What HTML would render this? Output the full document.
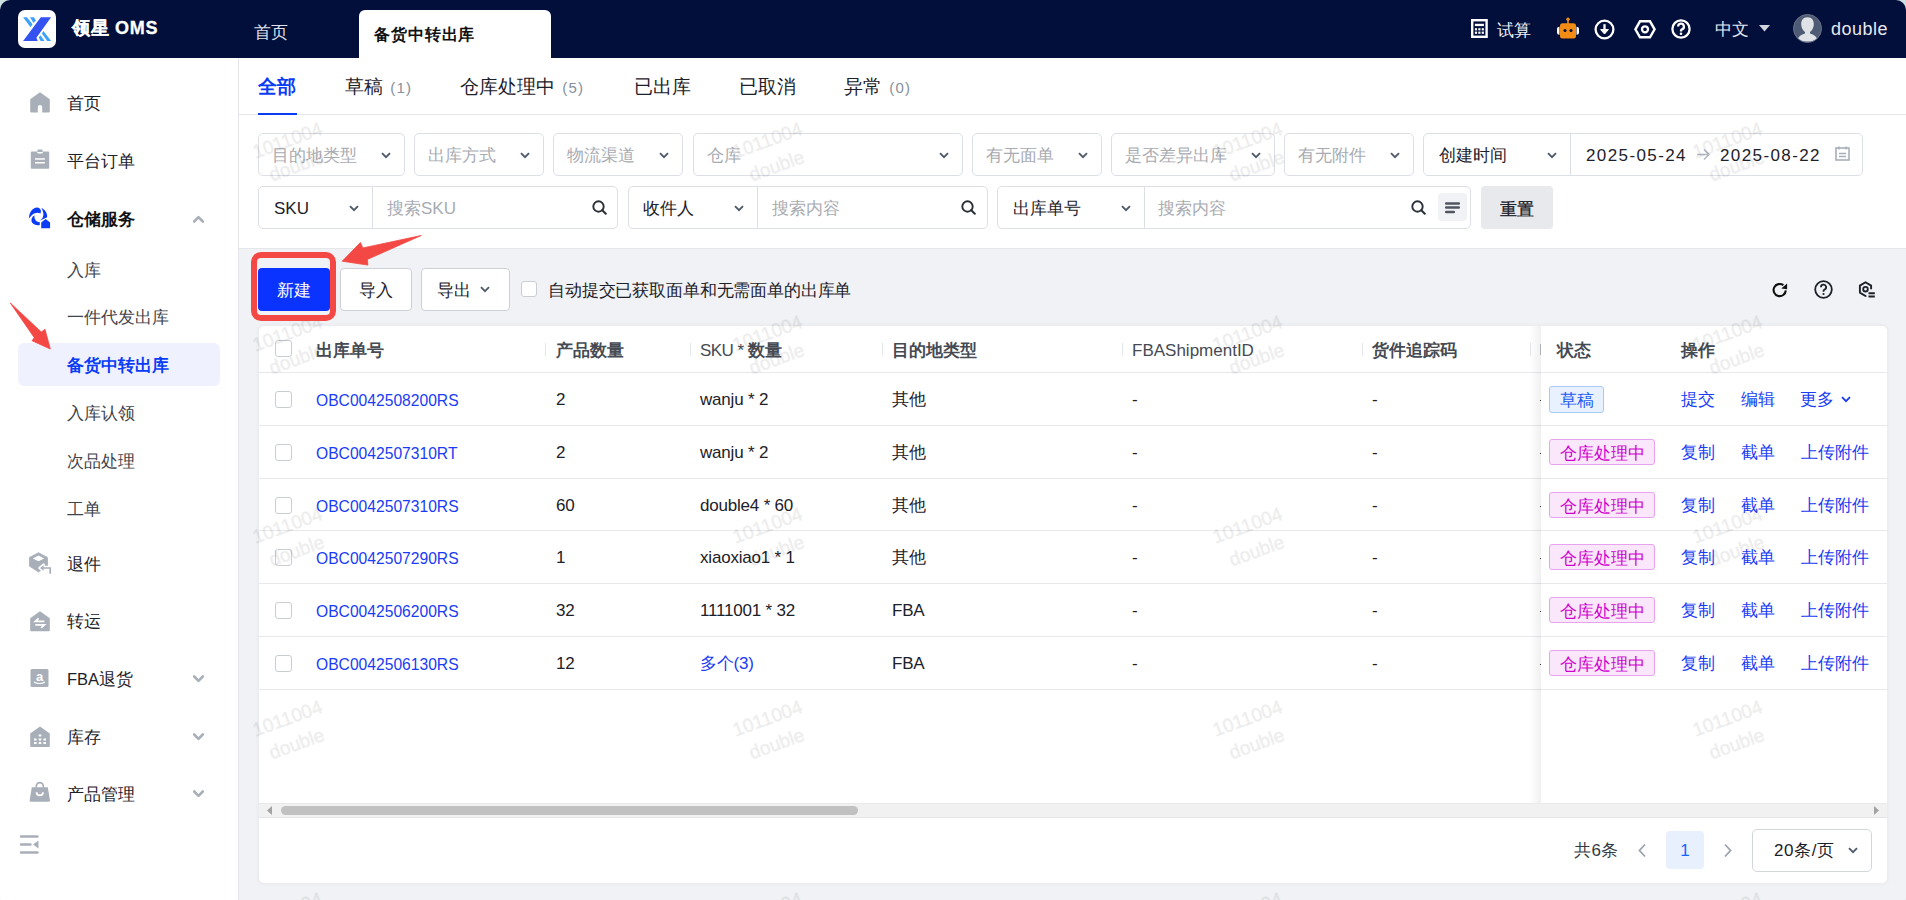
<!DOCTYPE html>
<html><head><meta charset="utf-8">
<style>
*{box-sizing:border-box;margin:0;padding:0}
html,body{width:1906px;height:900px;overflow:hidden;background:#cfe0e1}
body{font-family:"Liberation Sans",sans-serif;font-size:17px;color:#1d2129;position:relative}
.a{position:absolute;white-space:nowrap}
#win{position:absolute;left:0;top:0;width:1906px;height:907px;border-radius:10px;overflow:hidden;background:#f0f2f5}
#hdr{position:absolute;left:0;top:0;width:1906px;height:58px;background:#020f3b}
#side{position:absolute;left:0;top:58px;width:239px;height:842px;background:#fff;border-right:1px solid #e5e6eb}
.t{position:absolute;white-space:nowrap;line-height:20px;height:20px}
.box{position:absolute;border:1px solid #dcdfe6;border-radius:5px;background:#fff}
.ph{color:#a8abb2}
.chev{position:absolute;width:10px;height:6px}
.sep{position:absolute;width:1px;background:#dcdfe6}
.row{position:absolute;left:259px;width:1628px;height:1px;background:#e6e8eb}
.lnk{color:#1a3cf5}
.cb{position:absolute;width:17px;height:17px;border:1px solid #c9cdd4;border-radius:3px;background:#fff}
.cnt{font-size:15px;color:#86909c;letter-spacing:1.2px;margin-left:2px}
.th{font-weight:bold;color:#464b53;font-size:16.5px}
.sb{font-size:16.5px}
.tag{position:absolute;border-radius:3px;text-align:center;line-height:28px;white-space:nowrap}
.num{letter-spacing:-0.2px}
.obc{transform:scaleX(0.92);transform-origin:0 50%}
.wm{position:absolute;color:#000;-webkit-text-stroke:0.5px #000;opacity:0.065;font-size:19px;line-height:27px;text-align:center;transform:rotate(-20deg);width:100px;white-space:nowrap}
</style></head><body>
<div id="win">
<!-- HEADER -->
<div id="hdr">
  <div class="a" style="left:18px;top:10px;width:38px;height:38px;background:#fff;border-radius:7px">
    <svg width="38" height="38" viewBox="0 0 38 38" style="position:absolute;left:0;top:0">
      <polygon points="22.8,7.2 33.1,7.2 18.4,27.8 19.8,31 5.1,31" fill="#3352f0"/>
      <polygon points="5.1,7.2 8.9,7.2 14.6,14.2 12.5,17.3" fill="#3ba1fd"/>
      <polygon points="12,7.2 15.9,7.2 17.9,10.4 15.5,12.9" fill="#3ba1fd"/>
      <polygon points="25.4,20.9 33.1,31 29.2,31 23.9,23.5" fill="#3ba1fd"/>
      <polygon points="22.4,25.3 26.6,31 22.6,31 20.7,27.5" fill="#3ba1fd"/>
    </svg>
  </div>
  <div class="t" style="left:72px;top:18px;font-size:18px;font-weight:bold;color:#fff;letter-spacing:0.7px;-webkit-text-stroke:0.3px #fff">领星 OMS</div>
  <div class="t" style="left:254px;top:23px;color:#dde1ea">首页</div>
  <div class="a" style="left:359px;top:10px;width:192px;height:48px;background:#fff;border-radius:6px 6px 0 0"></div>
  <div class="t" style="left:374px;top:25px;font-size:16px;font-weight:bold;color:#111;letter-spacing:0.9px">备货中转出库</div>
  <!-- right -->
  <svg class="a" style="left:1471px;top:19px" width="17" height="19" viewBox="0 0 17 19"><rect x="1.2" y="1.2" width="14.4" height="16.6" fill="none" stroke="#fff" stroke-width="2.4"/><rect x="3.9" y="4.8" width="9" height="2.3" fill="#fff"/><g fill="#fff"><rect x="3.9" y="9.2" width="2.2" height="2.2"/><rect x="7.3" y="9.2" width="2.2" height="2.2"/><rect x="10.7" y="9.2" width="2.2" height="2.2"/><rect x="3.9" y="12.6" width="2.2" height="2.2"/><rect x="7.3" y="12.6" width="2.2" height="2.2"/><rect x="10.7" y="12.6" width="2.2" height="2.2"/></g></svg>
  <div class="t" style="left:1497px;top:21px;color:#eef0f4">试算</div>
  <svg class="a" style="left:1556px;top:17px" width="24" height="23" viewBox="0 0 24 23"><circle cx="12" cy="2.2" r="1.7" fill="#f28c14"/><rect x="11.2" y="2.5" width="1.6" height="4.5" fill="#f28c14"/><rect x="4" y="6.2" width="16" height="15.2" rx="2.5" fill="#f28c14"/><path d="M3.5 9.8H3.2A2.2 2.2 0 0 0 1 12V15.6A2.2 2.2 0 0 0 3.2 17.8H3.5Z M20.5 9.8H20.8A2.2 2.2 0 0 1 23 12V15.6A2.2 2.2 0 0 1 20.8 17.8H20.5Z" fill="#fff"/><circle cx="9" cy="13.6" r="1.5" fill="#020f3b"/><circle cx="15" cy="13.6" r="1.5" fill="#020f3b"/></svg>
  <svg class="a" style="left:1594px;top:19px" width="21" height="21" viewBox="0 0 21 21"><circle cx="10.5" cy="10.5" r="8.9" fill="none" stroke="#fff" stroke-width="2.3"/><path d="M10.5 5.2v6" fill="none" stroke="#fff" stroke-width="2.3"/><path d="M6.6 10.6h7.8l-3.9 4.4z" fill="#fff" stroke="#fff" stroke-width="1" stroke-linejoin="round"/></svg>
  <svg class="a" style="left:1634px;top:20px" width="22" height="19" viewBox="0 0 22 19"><polygon points="6,1.3 16,1.3 20.6,9.3 16,17.3 6,17.3 1.4,9.3" fill="none" stroke="#fff" stroke-width="2.4"/><circle cx="11" cy="9.3" r="3" fill="none" stroke="#fff" stroke-width="2.3"/></svg>
  <svg class="a" style="left:1671px;top:19px" width="20" height="20" viewBox="0 0 20 20"><circle cx="10" cy="10" r="8.6" fill="none" stroke="#fff" stroke-width="2.3"/><path d="M7.1 7.6a2.9 2.9 0 1 1 3.9 2.7c-.7.3-1 .8-1 1.5v.6" fill="none" stroke="#fff" stroke-width="2.3"/><circle cx="10" cy="14.8" r="1.3" fill="#fff"/></svg>
  <div class="t" style="left:1715px;top:20px;color:#e6e8ee">中文</div>
  <svg class="a" style="left:1759px;top:25px" width="11" height="7" viewBox="0 0 11 7"><polygon points="0,0 11,0 5.5,6.5" fill="#d0d4dc"/></svg>
  <div class="a" style="left:1793px;top:14px;width:29px;height:29px;border-radius:50%;background:#4f5a74;overflow:hidden;border:1px solid #6a7388"><svg width="29" height="29" viewBox="0 0 29 29" style="position:absolute;left:-1px;top:-1px"><path d="M14.5 3.3C10 3.3 8 6.5 8.2 10.5C8.4 14 10 16.5 12 18L12 19.5C8 20.5 5.5 22.5 5 25C8 27 11 27.5 14.5 27.5C18 27.5 21 27 24 25C23.5 22.5 21 20.5 17 19.5L17 18C19 16.5 20.6 14 20.8 10.5C21 6.5 19 3.3 14.5 3.3Z" fill="#dfe2e7"/></svg></div>
  <div class="t" style="left:1831px;top:19px;color:#e6e8ee;font-size:18px;letter-spacing:0.5px">double</div>
</div>

<!-- SIDEBAR -->
<div id="side"></div>
<div class="a" style="left:18px;top:343px;width:202px;height:43px;background:#eff2fe;border-radius:6px"></div>
<div class="t sb" style="left:67px;top:93px">首页</div>
<div class="t sb" style="left:67px;top:151px">平台订单</div>
<div class="t sb" style="left:67px;top:209px;font-weight:bold;color:#111">仓储服务</div>
<div class="t sb" style="left:67px;top:260px;color:#3f434a">入库</div>
<div class="t sb" style="left:67px;top:307px;color:#3f434a">一件代发出库</div>
<div class="t sb" style="left:67px;top:355px;font-weight:bold;color:#0b3cf5">备货中转出库</div>
<div class="t sb" style="left:67px;top:403px;color:#3f434a">入库认领</div>
<div class="t sb" style="left:67px;top:451px;color:#3f434a">次品处理</div>
<div class="t sb" style="left:67px;top:499px;color:#3f434a">工单</div>
<div class="t sb" style="left:67px;top:554px">退件</div>
<div class="t sb" style="left:67px;top:611px">转运</div>
<div class="t sb" style="left:67px;top:669px">FBA退货</div>
<div class="t sb" style="left:67px;top:727px">库存</div>
<div class="t sb" style="left:67px;top:784px">产品管理</div>
<!-- sidebar icons -->
<svg class="a" style="left:30px;top:92px" width="20" height="21" viewBox="0 0 20 21"><path d="M10 0.3L19.8 7.2V19.6a0.8 0.8 0 0 1-0.8 0.8H12.2V15.3a2.2 2.2 0 0 0-4.4 0V20.4H1a0.8 0.8 0 0 1-0.8-0.8V7.2Z" fill="#a9afb9"/></svg>
<svg class="a" style="left:30px;top:149px" width="20" height="21" viewBox="0 0 20 21"><path d="M1.8 2.4H7.2V3.4a1 1 0 0 0 1 1H11.8a1 1 0 0 0 1-1V2.4H18.2a1 1 0 0 1 1 1V18.8a1 1 0 0 1-1 1H1.8a1 1 0 0 1-1-1V3.4a1 1 0 0 1 1-1Z" fill="#a9afb9"/><rect x="7.3" y="0.5" width="5.4" height="2.6" rx="1.2" fill="#a9afb9"/><rect x="5" y="9.2" width="9.8" height="1.5" fill="#fff"/><rect x="5" y="13" width="9.8" height="1.5" fill="#fff"/></svg>
<svg class="a" style="left:26px;top:204px" width="28" height="28" viewBox="0 0 28 28"><g fill="#0b3cf5"><path d="M3.1,14.4 C2.6,9 6.5,3.5 11.2,3.4 C12.8,3.4 14.2,4.3 15.0,6.8 L14.6,9.4 C12,8.2 8.5,8.5 6,11 C4.8,12.2 3.8,13.4 3.1,14.4 Z"/><path d="M15.3,3.9 C18.8,5.3 21.4,8.6 21.2,13.2 L13.6,16.8 C16.5,15 17.6,12.5 17.4,10 C17.2,7.8 16.5,5.6 15.3,3.9 Z"/><path d="M8.4,11.3 C5.8,13 4.6,16.5 6.2,18.8 C7.8,21 11,21.6 13.8,21 L13.8,18.3 C11.5,18.3 9.5,17 8.8,14.8 C8.4,13.6 8.3,12.4 8.4,11.3 Z"/><path d="M15.2,24.2 V18.6 L19.6,15.1 L24.1,18.6 V24.2 Z"/></g></svg>
<svg class="a" style="left:193px;top:215px" width="11" height="8" viewBox="0 0 11 8"><path d="M1.2 6.5L5.5 2.2 9.8 6.5" fill="none" stroke="#a9afb9" stroke-width="2.6" stroke-linecap="round" stroke-linejoin="round"/></svg>
<svg class="a" style="left:29px;top:552px" width="23" height="23" viewBox="0 0 23 23"><path d="M9.5 0.7L18.5 5.5V14L9.5 20 0.3 14V5.5Z" fill="#a9afb9" stroke="#a9afb9" stroke-width="0.8" stroke-linejoin="round"/><path d="M9.5 3.6L15.2 6.4 9.5 9.2 3.8 6.4Z" fill="#fff"/><path d="M12 16H21.2V21.8" fill="none" stroke="#fff" stroke-width="4.6"/><path d="M10.5 16L14.6 12.6V19.4Z" fill="#fff" stroke="#fff" stroke-width="2.4" stroke-linejoin="round"/><path d="M13 16H21.2V21.8" fill="none" stroke="#a9afb9" stroke-width="1.7"/><path d="M11 16L14.6 13.2V18.8Z" fill="#a9afb9"/></svg>
<svg class="a" style="left:30px;top:611px" width="20" height="21" viewBox="0 0 20 21"><path d="M10 0.3L19.8 7.2V19.4a0.8 0.8 0 0 1-0.8 0.8H1a0.8 0.8 0 0 1-0.8-0.8V7.2Z" fill="#a9afb9"/><path d="M14.4 10.4H5.3L8.6 7.4M5.3 13.8H14.4L11.1 16.8" fill="none" stroke="#fff" stroke-width="1.7"/></svg>
<svg class="a" style="left:30px;top:669px" width="19" height="18" viewBox="0 0 19 18"><rect x="0.5" y="0" width="18" height="18" rx="1.5" fill="#a9afb9"/><text x="9.5" y="11.8" font-size="13" font-weight="bold" font-family="Liberation Sans" fill="#fff" text-anchor="middle">a</text><path d="M4 13c3 2 8 2 11 0" fill="none" stroke="#fff" stroke-width="1.2"/></svg>
<svg class="a" style="left:30px;top:726px" width="20" height="21" viewBox="0 0 20 21"><path d="M10 0.5L19.8 7.5V20a1 1 0 0 1-1 1H1.2a1 1 0 0 1-1-1V7.5z" fill="#a9afb9"/><g fill="#fff"><rect x="8.7" y="8.5" width="2.6" height="2"/><rect x="4" y="12.5" width="2.6" height="2"/><rect x="8.7" y="12.5" width="2.6" height="2"/><rect x="13.4" y="12.5" width="2.6" height="2"/><rect x="4" y="16" width="2.6" height="2"/><rect x="8.7" y="16" width="2.6" height="2"/><rect x="13.4" y="16" width="2.6" height="2"/></g></svg>
<svg class="a" style="left:29px;top:781px" width="22" height="22" viewBox="0 0 22 22"><path d="M7.3 6.5V5.2a3.5 3.5 0 0 1 7 0V6.5" fill="none" stroke="#a9afb9" stroke-width="1.7"/><path d="M2.8 6.2H18.8L21 19.6a1 1 0 0 1-1 1.1H1.6a1 1 0 0 1-1-1.1Z" fill="#a9afb9"/><path d="M7.6 11.2a3.2 3.2 0 0 0 6.4 0" fill="none" stroke="#fff" stroke-width="1.8"/></svg>
<svg class="a" style="left:193px;top:675px" width="11" height="8" viewBox="0 0 11 8"><path d="M1.2 1.5L5.5 5.8 9.8 1.5" fill="none" stroke="#a9afb9" stroke-width="2.6" stroke-linecap="round" stroke-linejoin="round"/></svg>
<svg class="a" style="left:193px;top:733px" width="11" height="8" viewBox="0 0 11 8"><path d="M1.2 1.5L5.5 5.8 9.8 1.5" fill="none" stroke="#a9afb9" stroke-width="2.6" stroke-linecap="round" stroke-linejoin="round"/></svg>
<svg class="a" style="left:193px;top:790px" width="11" height="8" viewBox="0 0 11 8"><path d="M1.2 1.5L5.5 5.8 9.8 1.5" fill="none" stroke="#a9afb9" stroke-width="2.6" stroke-linecap="round" stroke-linejoin="round"/></svg>
<svg class="a" style="left:19px;top:834px" width="21" height="21" viewBox="0 0 21 21"><g stroke="#a9afb9" stroke-width="2.4" stroke-linecap="round"><path d="M2 2.5h16.5M2 10.5h9.5M2 18.5h16.5"/></g><path d="M19.5 6.5v8L14 10.5z" fill="#a9afb9"/></svg>
<!-- sidebar red arrow -->


<!-- CONTENT top white -->
<div class="a" style="left:239px;top:58px;width:1667px;height:190px;background:#fff"></div>
<div class="a" style="left:239px;top:114px;width:1667px;height:1px;background:#e5e6eb"></div>
<div class="a" style="left:239px;top:248px;width:1667px;height:1px;background:#e6e7eb"></div>
<!-- TABS -->
<div class="t" style="left:258px;top:77px;font-size:19px;font-weight:bold;color:#0b3cf5">全部</div>
<div class="a" style="left:258px;top:113px;width:39px;height:2px;background:#0b3cf5"></div>
<div class="t" style="left:345px;top:77px;font-size:19px">草稿 <span class="cnt">(1)</span></div>
<div class="t" style="left:460px;top:77px;font-size:19px">仓库处理中 <span class="cnt">(5)</span></div>
<div class="t" style="left:634px;top:77px;font-size:19px">已出库</div>
<div class="t" style="left:739px;top:77px;font-size:19px">已取消</div>
<div class="t" style="left:844px;top:77px;font-size:19px">异常 <span class="cnt">(0)</span></div>

<!-- FILTER ROW 1 -->
<div class="box" style="left:258px;top:133px;width:147px;height:43px"></div>
<div class="t ph" style="left:272px;top:146px">目的地类型</div>
<div class="box" style="left:414px;top:133px;width:130px;height:43px"></div>
<div class="t ph" style="left:428px;top:146px">出库方式</div>
<div class="box" style="left:553px;top:133px;width:130px;height:43px"></div>
<div class="t ph" style="left:567px;top:146px">物流渠道</div>
<div class="box" style="left:693px;top:133px;width:270px;height:43px"></div>
<div class="t ph" style="left:707px;top:146px">仓库</div>
<div class="box" style="left:972px;top:133px;width:130px;height:43px"></div>
<div class="t ph" style="left:986px;top:146px">有无面单</div>
<div class="box" style="left:1111px;top:133px;width:164px;height:43px"></div>
<div class="t ph" style="left:1125px;top:146px">是否差异出库</div>
<div class="box" style="left:1284px;top:133px;width:130px;height:43px"></div>
<div class="t ph" style="left:1298px;top:146px">有无附件</div>
<div class="box" style="left:1423px;top:133px;width:440px;height:43px"></div>
<div class="sep" style="left:1570px;top:134px;height:41px"></div>
<div class="t" style="left:1439px;top:146px">创建时间</div>
<div class="t" style="left:1586px;top:146px;letter-spacing:1.4px">2025-05-24</div>
<div class="t" style="left:1720px;top:146px;letter-spacing:1.4px">2025-08-22</div>
<svg class="a" style="left:1696px;top:148px" width="15" height="13" viewBox="0 0 15 13"><path d="M1 6.5h12M8 1.5l5 5-5 5" fill="none" stroke="#b5b9c2" stroke-width="1.6"/></svg>
<svg class="a" style="left:1835px;top:146px" width="15" height="15" viewBox="0 0 15 15"><rect x="1" y="2" width="13" height="12" fill="none" stroke="#a9afb9" stroke-width="1.6"/><path d="M4 0.5v3M11 0.5v3M4 7.5h7M4 10.5h7" stroke="#a9afb9" stroke-width="1.5"/></svg>

<!-- FILTER ROW 2 -->
<div class="box" style="left:258px;top:186px;width:360px;height:43px"></div>
<div class="sep" style="left:372px;top:187px;height:41px"></div>
<div class="t" style="left:274px;top:199px">SKU</div>
<div class="t ph" style="left:387px;top:199px">搜索SKU</div>
<div class="box" style="left:628px;top:186px;width:360px;height:43px"></div>
<div class="sep" style="left:757px;top:187px;height:41px"></div>
<div class="t" style="left:643px;top:199px">收件人</div>
<div class="t ph" style="left:772px;top:199px">搜索内容</div>
<div class="box" style="left:997px;top:186px;width:474px;height:43px"></div>
<div class="sep" style="left:1144px;top:187px;height:41px"></div>
<div class="t" style="left:1013px;top:199px">出库单号</div>
<div class="t ph" style="left:1158px;top:199px">搜索内容</div>
<div class="a" style="left:1438px;top:193px;width:29px;height:28px;background:#f0f2f5;border-radius:4px"></div>
<svg class="a" style="left:1443px;top:200px" width="19" height="15" viewBox="0 0 19 15"><path d="M3.2 3.4h12.6M3.2 7.5h12.6M3.2 12h7.6" stroke="#50555f" stroke-width="2.5" stroke-linecap="round"/></svg>
<div class="a" style="left:1481px;top:186px;width:72px;height:43px;background:#e8e9ed;border-radius:4px"></div>
<div class="t" style="left:1500px;top:200px;color:#1d2129;-webkit-text-stroke:0.35px #1d2129">重置</div>
<svg class="a" style="left:381px;top:152px" width="10" height="7" viewBox="0 0 10 7"><path d="M1 1.2L5 5.2 9 1.2" fill="none" stroke="#4e5969" stroke-width="1.9"/></svg>
<svg class="a" style="left:520px;top:152px" width="10" height="7" viewBox="0 0 10 7"><path d="M1 1.2L5 5.2 9 1.2" fill="none" stroke="#4e5969" stroke-width="1.9"/></svg>
<svg class="a" style="left:659px;top:152px" width="10" height="7" viewBox="0 0 10 7"><path d="M1 1.2L5 5.2 9 1.2" fill="none" stroke="#4e5969" stroke-width="1.9"/></svg>
<svg class="a" style="left:939px;top:152px" width="10" height="7" viewBox="0 0 10 7"><path d="M1 1.2L5 5.2 9 1.2" fill="none" stroke="#4e5969" stroke-width="1.9"/></svg>
<svg class="a" style="left:1078px;top:152px" width="10" height="7" viewBox="0 0 10 7"><path d="M1 1.2L5 5.2 9 1.2" fill="none" stroke="#4e5969" stroke-width="1.9"/></svg>
<svg class="a" style="left:1251px;top:152px" width="10" height="7" viewBox="0 0 10 7"><path d="M1 1.2L5 5.2 9 1.2" fill="none" stroke="#4e5969" stroke-width="1.9"/></svg>
<svg class="a" style="left:1390px;top:152px" width="10" height="7" viewBox="0 0 10 7"><path d="M1 1.2L5 5.2 9 1.2" fill="none" stroke="#4e5969" stroke-width="1.9"/></svg>
<svg class="a" style="left:1547px;top:152px" width="10" height="7" viewBox="0 0 10 7"><path d="M1 1.2L5 5.2 9 1.2" fill="none" stroke="#4e5969" stroke-width="1.9"/></svg>
<svg class="a" style="left:349px;top:205px" width="10" height="7" viewBox="0 0 10 7"><path d="M1 1.2L5 5.2 9 1.2" fill="none" stroke="#4e5969" stroke-width="1.9"/></svg>
<svg class="a" style="left:734px;top:205px" width="10" height="7" viewBox="0 0 10 7"><path d="M1 1.2L5 5.2 9 1.2" fill="none" stroke="#4e5969" stroke-width="1.9"/></svg>
<svg class="a" style="left:1121px;top:205px" width="10" height="7" viewBox="0 0 10 7"><path d="M1 1.2L5 5.2 9 1.2" fill="none" stroke="#4e5969" stroke-width="1.9"/></svg>
<svg class="a" style="left:592px;top:200px" width="15" height="15" viewBox="0 0 15 15"><circle cx="6.5" cy="6.5" r="5.2" fill="none" stroke="#2b3037" stroke-width="1.9"/><path d="M10.3 10.3L13.8 13.8" stroke="#2b3037" stroke-width="2" stroke-linecap="round"/></svg>
<svg class="a" style="left:961px;top:200px" width="15" height="15" viewBox="0 0 15 15"><circle cx="6.5" cy="6.5" r="5.2" fill="none" stroke="#2b3037" stroke-width="1.9"/><path d="M10.3 10.3L13.8 13.8" stroke="#2b3037" stroke-width="2" stroke-linecap="round"/></svg>
<svg class="a" style="left:1411px;top:200px" width="15" height="15" viewBox="0 0 15 15"><circle cx="6.5" cy="6.5" r="5.2" fill="none" stroke="#2b3037" stroke-width="1.9"/><path d="M10.3 10.3L13.8 13.8" stroke="#2b3037" stroke-width="2" stroke-linecap="round"/></svg>


<!-- TOOLBAR -->
<div class="a" style="left:258px;top:268px;width:72px;height:43px;background:#0a33ff;border-radius:4px"></div>
<div class="t" style="left:277px;top:281px;color:#fff">新建</div>
<div class="box" style="left:340px;top:268px;width:72px;height:43px;border-radius:4px;border-color:#cdd0d6"></div>
<div class="t" style="left:359px;top:281px">导入</div>
<div class="box" style="left:421px;top:268px;width:89px;height:43px;border-radius:4px;border-color:#cdd0d6"></div>
<div class="t" style="left:437px;top:281px">导出</div>
<svg class="a" style="left:480px;top:286px" width="10" height="7" viewBox="0 0 10 7"><path d="M1 1.2L5 5.2 9 1.2" fill="none" stroke="#4e5969" stroke-width="1.8"/></svg>
<div class="cb" style="left:521px;top:281px;width:16px;height:16px"></div>
<div class="t" style="left:548px;top:281px;letter-spacing:-0.15px">自动提交已获取面单和无需面单的出库单</div>

<svg class="a" style="left:1772px;top:282px" width="17" height="17" viewBox="0 0 17 17"><path d="M13.8,8.4A6.1,6.1 0 1 1 11.4,3.2" fill="none" stroke="#111" stroke-width="2.1"/><path d="M15.1,1.4V7.3L9.3,6.4z" fill="#111"/></svg>
<svg class="a" style="left:1814px;top:280px" width="19" height="19" viewBox="0 0 19 19"><circle cx="9.5" cy="9.5" r="8.3" fill="none" stroke="#1d2129" stroke-width="1.8"/><path d="M6.9 7.2a2.6 2.6 0 1 1 3.6 2.4c-.6.3-1 .7-1 1.4v.8" fill="none" stroke="#1d2129" stroke-width="1.8"/><circle cx="9.5" cy="14" r="1.1" fill="#1d2129"/></svg>
<svg class="a" style="left:1857px;top:281px" width="19" height="17" viewBox="0 0 19 17"><path d="M14.1,8.2V4.6L8.5,1.2 2.9,4.6V11.6L8.5,15 9.3,14.5" fill="none" stroke="#1d2129" stroke-width="1.9" stroke-linejoin="round"/><circle cx="8.5" cy="8.2" r="2.3" fill="none" stroke="#1d2129" stroke-width="1.8"/><path d="M11.5,12.2H17.8M11.5,15.5H17.8" stroke="#1d2129" stroke-width="1.9"/></svg>

<!-- TABLE CARD -->
<div class="a" style="left:258px;top:325px;width:1630px;height:559px;background:#fff;border-radius:6px;border:1px solid #eaecef;box-shadow:0 0 4px rgba(0,0,0,0.04)"></div>
<div class="cb" style="left:275px;top:340px"></div>
<div class="t th" style="left:316px;top:340px">出库单号</div>
<div class="t th" style="left:556px;top:340px">产品数量</div>
<div class="t th" style="left:700px;top:340px"><span style="font-weight:normal;font-size:17px;letter-spacing:-0.55px">SKU * </span>数量</div>
<div class="t th" style="left:892px;top:340px">目的地类型</div>
<div class="t th" style="left:1132px;top:340px"><span style="font-weight:normal;font-size:17px">FBAShipmentID</span></div>
<div class="t th" style="left:1372px;top:340px">货件追踪码</div>
<div class="sep" style="left:545px;top:343px;height:13px;background:#e3e5e8"></div>
<div class="sep" style="left:690px;top:343px;height:13px;background:#e3e5e8"></div>
<div class="sep" style="left:882px;top:343px;height:13px;background:#e3e5e8"></div>
<div class="sep" style="left:1122px;top:343px;height:13px;background:#e3e5e8"></div>
<div class="sep" style="left:1362px;top:343px;height:13px;background:#e3e5e8"></div>
<div class="sep" style="left:1530px;top:343px;height:13px;background:#e3e5e8"></div>
<div class="row" style="top:372px"></div>
<div class="row" style="top:425px"></div>
<div class="row" style="top:478px"></div>
<div class="row" style="top:530px"></div>
<div class="row" style="top:583px"></div>
<div class="row" style="top:636px"></div>
<div class="row" style="top:689px"></div>
<div class="cb" style="left:275px;top:391px"></div>
<div class="t lnk obc" style="left:316px;top:391px">OBC0042508200RS</div>
<div class="t num" style="left:556px;top:390px">2</div>
<div class="t num" style="left:700px;top:390px">wanju * 2</div>
<div class="t num" style="left:892px;top:390px">其他</div>
<div class="t" style="left:1132px;top:390px">-</div>
<div class="t" style="left:1372px;top:390px">-</div>
<div class="cb" style="left:275px;top:444px"></div>
<div class="t lnk obc" style="left:316px;top:444px">OBC0042507310RT</div>
<div class="t num" style="left:556px;top:443px">2</div>
<div class="t num" style="left:700px;top:443px">wanju * 2</div>
<div class="t num" style="left:892px;top:443px">其他</div>
<div class="t" style="left:1132px;top:443px">-</div>
<div class="t" style="left:1372px;top:443px">-</div>
<div class="cb" style="left:275px;top:497px"></div>
<div class="t lnk obc" style="left:316px;top:497px">OBC0042507310RS</div>
<div class="t num" style="left:556px;top:496px">60</div>
<div class="t num" style="left:700px;top:496px">double4 * 60</div>
<div class="t num" style="left:892px;top:496px">其他</div>
<div class="t" style="left:1132px;top:496px">-</div>
<div class="t" style="left:1372px;top:496px">-</div>
<div class="cb" style="left:275px;top:549px"></div>
<div class="t lnk obc" style="left:316px;top:549px">OBC0042507290RS</div>
<div class="t num" style="left:556px;top:548px">1</div>
<div class="t num" style="left:700px;top:548px">xiaoxiao1 * 1</div>
<div class="t num" style="left:892px;top:548px">其他</div>
<div class="t" style="left:1132px;top:548px">-</div>
<div class="t" style="left:1372px;top:548px">-</div>
<div class="cb" style="left:275px;top:602px"></div>
<div class="t lnk obc" style="left:316px;top:602px">OBC0042506200RS</div>
<div class="t num" style="left:556px;top:601px">32</div>
<div class="t num" style="left:700px;top:601px">1111001 * 32</div>
<div class="t num" style="left:892px;top:601px">FBA</div>
<div class="t" style="left:1132px;top:601px">-</div>
<div class="t" style="left:1372px;top:601px">-</div>
<div class="cb" style="left:275px;top:655px"></div>
<div class="t lnk obc" style="left:316px;top:655px">OBC0042506130RS</div>
<div class="t num" style="left:556px;top:654px">12</div>
<div class="t num" style="left:700px;top:654px"><span class="lnk">多个(3)</span></div>
<div class="t num" style="left:892px;top:654px">FBA</div>
<div class="t" style="left:1132px;top:654px">-</div>
<div class="t" style="left:1372px;top:654px">-</div>
<div class="a" style="left:1540px;top:344px;width:1px;height:11px;background:#8a8f96;opacity:0.6"></div>
<div class="a" style="left:1540px;top:400px;width:1px;height:1px;background:#333"></div>
<div class="a" style="left:1540px;top:453px;width:1px;height:1px;background:#333"></div>
<div class="a" style="left:1540px;top:506px;width:1px;height:1px;background:#333"></div>
<div class="a" style="left:1540px;top:558px;width:1px;height:1px;background:#333"></div>
<div class="a" style="left:1540px;top:611px;width:1px;height:1px;background:#333"></div>
<div class="a" style="left:1540px;top:664px;width:1px;height:1px;background:#333"></div>
<div class="a" style="left:1530px;top:326px;width:12px;height:477px;background:linear-gradient(to right,rgba(0,0,0,0),rgba(0,0,0,0.065))"></div>
<div class="a" style="left:1541px;top:326px;width:346px;height:477px;background:#fff;border-top-right-radius:6px"></div>
<div class="t th" style="left:1557px;top:340px">状态</div>
<div class="t th" style="left:1681px;top:340px">操作</div>
<div class="a" style="left:1541px;top:372px;width:346px;height:1px;background:#e6e8eb"></div>
<div class="a" style="left:1541px;top:425px;width:346px;height:1px;background:#e6e8eb"></div>
<div class="a" style="left:1541px;top:478px;width:346px;height:1px;background:#e6e8eb"></div>
<div class="a" style="left:1541px;top:530px;width:346px;height:1px;background:#e6e8eb"></div>
<div class="a" style="left:1541px;top:583px;width:346px;height:1px;background:#e6e8eb"></div>
<div class="a" style="left:1541px;top:636px;width:346px;height:1px;background:#e6e8eb"></div>
<div class="a" style="left:1541px;top:689px;width:346px;height:1px;background:#e6e8eb"></div>
<div class="a tag" style="left:1549px;top:386px;width:55px;height:27px;background:#e8f1ff;border:1px solid #a9c9f7;color:#1d5cf2">草稿</div>
<div class="t lnk" style="left:1681px;top:390px">提交</div>
<div class="t lnk" style="left:1741px;top:390px">编辑</div>
<div class="t lnk" style="left:1800px;top:390px">更多</div>
<svg class="a" style="left:1841px;top:396px" width="10" height="7" viewBox="0 0 10 7"><path d="M1 1.2L5 5.2 9 1.2" fill="none" stroke="#1a3cf5" stroke-width="1.8"/></svg>
<div class="a tag" style="left:1549px;top:439px;width:106px;height:26px;background:#fbe7fb;border:1px solid #e8a3ee;color:#cf00cf">仓库处理中</div>
<div class="t lnk" style="left:1681px;top:443px">复制</div>
<div class="t lnk" style="left:1741px;top:443px">截单</div>
<div class="t lnk" style="left:1801px;top:443px">上传附件</div>
<div class="a tag" style="left:1549px;top:492px;width:106px;height:26px;background:#fbe7fb;border:1px solid #e8a3ee;color:#cf00cf">仓库处理中</div>
<div class="t lnk" style="left:1681px;top:496px">复制</div>
<div class="t lnk" style="left:1741px;top:496px">截单</div>
<div class="t lnk" style="left:1801px;top:496px">上传附件</div>
<div class="a tag" style="left:1549px;top:544px;width:106px;height:26px;background:#fbe7fb;border:1px solid #e8a3ee;color:#cf00cf">仓库处理中</div>
<div class="t lnk" style="left:1681px;top:548px">复制</div>
<div class="t lnk" style="left:1741px;top:548px">截单</div>
<div class="t lnk" style="left:1801px;top:548px">上传附件</div>
<div class="a tag" style="left:1549px;top:597px;width:106px;height:26px;background:#fbe7fb;border:1px solid #e8a3ee;color:#cf00cf">仓库处理中</div>
<div class="t lnk" style="left:1681px;top:601px">复制</div>
<div class="t lnk" style="left:1741px;top:601px">截单</div>
<div class="t lnk" style="left:1801px;top:601px">上传附件</div>
<div class="a tag" style="left:1549px;top:650px;width:106px;height:26px;background:#fbe7fb;border:1px solid #e8a3ee;color:#cf00cf">仓库处理中</div>
<div class="t lnk" style="left:1681px;top:654px">复制</div>
<div class="t lnk" style="left:1741px;top:654px">截单</div>
<div class="t lnk" style="left:1801px;top:654px">上传附件</div>
<div class="a" style="left:259px;top:803px;width:1628px;height:15px;background:#f1f1f1;border-top:1px solid #e9e9ea;border-bottom:1px solid #e3e5e9"></div>
<div class="a" style="left:281px;top:806px;width:577px;height:9px;background:#c1c1c1;border-radius:5px"></div>
<svg class="a" style="left:266px;top:805px" width="7" height="11" viewBox="0 0 7 11"><path d="M6 1v9L1 5.5z" fill="#a3a3a3"/></svg>
<svg class="a" style="left:1873px;top:805px" width="7" height="11" viewBox="0 0 7 11"><path d="M1 1v9l5-4.5z" fill="#a3a3a3"/></svg>
<!-- PAGINATION -->
<div class="t" style="left:1574px;top:841px;color:#333a44;letter-spacing:0.5px">共6条</div>
<svg class="a" style="left:1637px;top:843px" width="10" height="15" viewBox="0 0 10 15"><path d="M8 1.5L2.5 7.5 8 13.5" fill="none" stroke="#9ca3ad" stroke-width="1.8"/></svg>
<div class="a" style="left:1666px;top:831px;width:38px;height:38px;background:#e8f0fe;border-radius:4px"></div>
<div class="t" style="left:1666px;top:841px;width:38px;text-align:center;color:#1664ff">1</div>
<svg class="a" style="left:1723px;top:843px" width="10" height="15" viewBox="0 0 10 15"><path d="M2 1.5L7.5 7.5 2 13.5" fill="none" stroke="#9ca3ad" stroke-width="1.8"/></svg>
<div class="box" style="left:1752px;top:829px;width:120px;height:43px;border-radius:5px;border-color:#d3d6db"></div>
<div class="t" style="left:1774px;top:841px;letter-spacing:0.6px">20条/页</div>
<svg class="a" style="left:1848px;top:847px" width="10" height="7" viewBox="0 0 10 7"><path d="M1 1.2L5 5.2 9 1.2" fill="none" stroke="#4e5969" stroke-width="1.8"/></svg>

<!-- WATERMARK -->
<div class="wm" style="left:242px;top:126.0px">1011004<br>double</div>
<div class="wm" style="left:722px;top:126.0px">1011004<br>double</div>
<div class="wm" style="left:1202px;top:126.0px">1011004<br>double</div>
<div class="wm" style="left:1682px;top:126.0px">1011004<br>double</div>
<div class="wm" style="left:242px;top:318.5px">1011004<br>double</div>
<div class="wm" style="left:722px;top:318.5px">1011004<br>double</div>
<div class="wm" style="left:1202px;top:318.5px">1011004<br>double</div>
<div class="wm" style="left:1682px;top:318.5px">1011004<br>double</div>
<div class="wm" style="left:242px;top:511.0px">1011004<br>double</div>
<div class="wm" style="left:722px;top:511.0px">1011004<br>double</div>
<div class="wm" style="left:1202px;top:511.0px">1011004<br>double</div>
<div class="wm" style="left:1682px;top:511.0px">1011004<br>double</div>
<div class="wm" style="left:242px;top:703.5px">1011004<br>double</div>
<div class="wm" style="left:722px;top:703.5px">1011004<br>double</div>
<div class="wm" style="left:1202px;top:703.5px">1011004<br>double</div>
<div class="wm" style="left:1682px;top:703.5px">1011004<br>double</div>
<div class="wm" style="left:242px;top:896.0px">1011004<br>double</div>
<div class="wm" style="left:722px;top:896.0px">1011004<br>double</div>
<div class="wm" style="left:1202px;top:896.0px">1011004<br>double</div>
<div class="wm" style="left:1682px;top:896.0px">1011004<br>double</div>
<!-- ANNOTATIONS -->
<div class="a" style="left:251px;top:252px;width:85px;height:69px;border:6px solid #f34844;border-radius:10px"></div>
<svg class="a" style="left:330px;top:230px" width="100" height="45" viewBox="330 230 100 45"><path d="M421.2,235.5 L362.9,247.9 L360.4,242.5 L342.2,261.2 L367.9,265.1 L367.4,259.4Z" fill="#f34844" stroke="#f34844" stroke-width="0.8" stroke-linejoin="round"/></svg>
<svg class="a" style="left:0px;top:290px" width="70" height="70" viewBox="0 290 70 70"><path d="M10.3,303 L41.3,332 L45,329.3 L50.3,349 L32,340.7 L34.3,337.7Z" fill="#f34844" stroke="#f34844" stroke-width="0.8" stroke-linejoin="round"/></svg>
</div>
</body></html>
